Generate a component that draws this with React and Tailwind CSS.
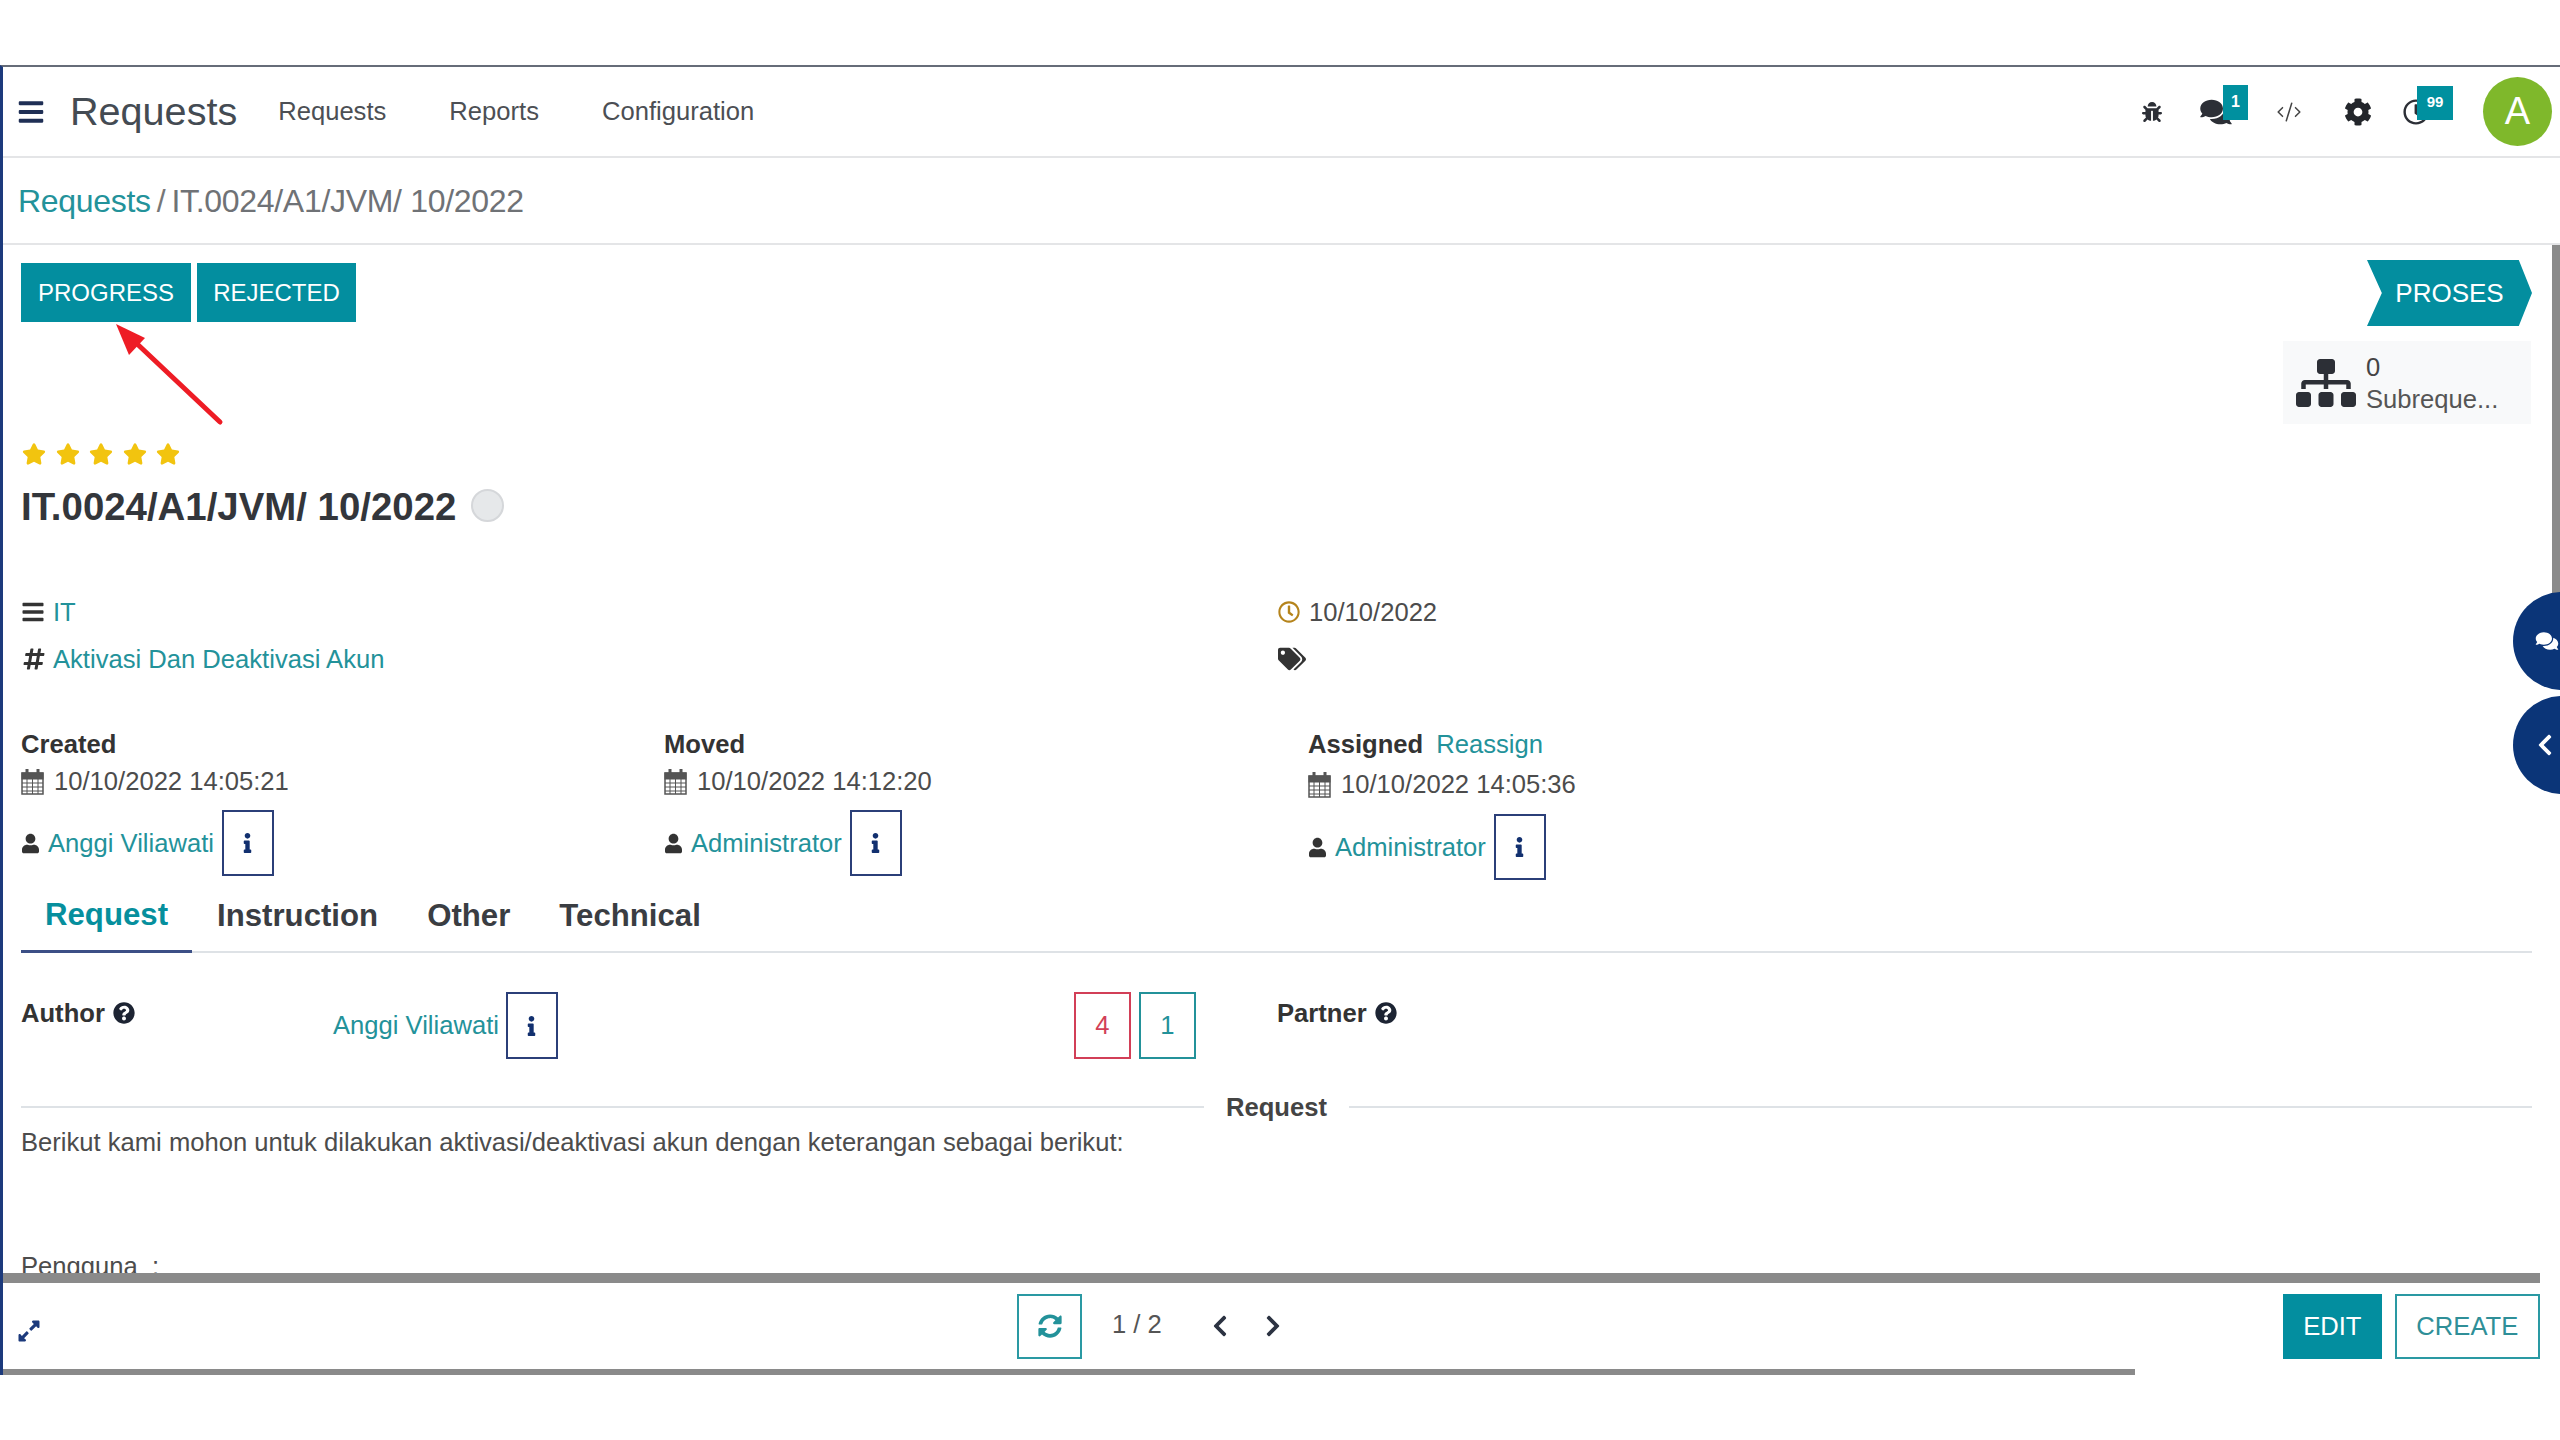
import { CodeXml } from 'lucide-react';
import {
    FaBars, FaBug, FaChevronLeft, FaChevronRight, FaCog, FaComments, FaExpandAlt,
    FaHashtag, FaInfo, FaQuestionCircle, FaRegClock, FaSitemap, FaStar, FaSyncAlt, FaTags, FaUser,
} from 'react-icons/fa';

function CalendarIcon() {
    return (
        <svg className="w-[23px] h-[27px] mr-[10px] text-[#555]" viewBox="0 0 23 27" fill="none" stroke="currentColor">
            <rect x="1" y="5" width="21" height="21" strokeWidth="1.5" />
            <rect x="1" y="5" width="21" height="6" fill="currentColor" />
            <path d="M1 15h21M1 19h21M1 23h21M6 11v15M11.500 11v15M17 11v15" strokeWidth="1" />
            <path d="M6 1v6M17 1v6" strokeWidth="3" />
        </svg>
    );
}

function InfoBox({ className = 'w-[51px] h-[66px]' }) {
    return (
        <div className={`border-2 border-[#2b3f78] flex items-center justify-center ${className}`}>
            <FaInfo className="w-[9px] h-[20px] text-[#12306f]" />
        </div>
    );
}

function Stamp({ label, extra, date, user, dateMt = 'mt-[7px]', userMt = 'mt-[14px]' }) {
    return (
        <div>
            <div className="flex items-baseline h-[30px] leading-[30px]">
                <span className="font-bold text-[#333]">{label}</span>
                {extra && <a className="ml-[13px] text-[#23929a]">{extra}</a>}
            </div>
            <div className={`flex items-center h-[30px] ${dateMt} text-[#4c4c4c]`}>
                <CalendarIcon />
                {date}
            </div>
            <div className={`flex items-center ml-[1px] ${userMt}`}>
                <FaUser className="w-[17px] h-[21px] text-[#333] mr-[9px]" />
                <a className="text-[#23929a]">{user}</a>
                <InfoBox className="ml-[8px] w-[52px] h-[66px]" />
            </div>
        </div>
    );
}

function NavIcon({ className = '', children }) {
    return <div className={`relative flex items-center justify-center ${className}`}>{children}</div>;
}

export default function App() {
    return (
        <div className="relative w-[2560px] h-[1440px] bg-white overflow-hidden pt-[65px] text-[25.6px] text-[#4c4c4c] font-['Liberation_Sans',Arial,sans-serif]">
            <div className="h-[1310px] border-t-2 border-[#666c78] border-l-[3px] border-l-[#1c3a7c] flex flex-col">
                {/* Top nav */}
                <header className="h-[91px] shrink-0 flex items-center border-b-2 border-[#e4e5e7]">
                    <FaBars className="ml-[14px] w-[28px] h-[28px] text-[#1f2f55]" />
                    <span className="ml-[25px] text-[39.6px] text-[#444b53]">Requests</span>
                    <nav className="ml-[41px] flex gap-[63px] text-[#4c4f54]">
                        <span>Requests</span>
                        <span>Reports</span>
                        <span>Configuration</span>
                    </nav>
                    <div className="ml-auto flex items-center h-full">
                        <NavIcon className="w-[24px]"><FaBug className="w-[20px] h-[20px] text-[#2c2f36]" /></NavIcon>
                        <NavIcon className="ml-[36px] w-[32px]">
                            <FaComments className="w-[32px] h-[28px] text-[#2c2f36]" />
                            <span className="absolute -top-[13px] left-[23px] w-[25px] h-[35px] bg-[#00909f] text-white text-[16px] font-bold flex items-center justify-center">1</span>
                        </NavIcon>
                        <NavIcon className="ml-[43px] w-[28px]"><CodeXml className="w-[28px] h-[26px] text-[#444]" strokeWidth={1.4} /></NavIcon>
                        <NavIcon className="ml-[41px] w-[28px]"><FaCog className="w-[28px] h-[28px] text-[#23262b]" /></NavIcon>
                        <NavIcon className="ml-[30px] w-[28px]">
                            <FaRegClock className="w-[26px] h-[26px] text-[#2c2f36]" />
                            <span className="absolute -top-[13px] left-[15px] w-[36px] h-[34px] bg-[#00909f] text-white text-[15px] font-bold flex items-center justify-center">99</span>
                        </NavIcon>
                        <div className="ml-[53px] mr-[8px] w-[69px] h-[69px] rounded-full bg-[#7fb82b] text-white text-[38px] flex items-center justify-center">A</div>
                    </div>
                </header>

                {/* Breadcrumb */}
                <div className="h-[87px] shrink-0 flex items-center border-b-2 border-[#e4e5e7] pl-[15px] text-[32px] -tracking-[0.3px]">
                    <a className="text-[#23929a]">Requests</a>
                    <span className="ml-[6px] text-[#777]">/</span>
                    <span className="ml-[6px] text-[#6f7276]">IT.0024/A1/JVM/ 10/2022</span>
                </div>

                {/* Form sheet */}
                <main className="relative flex-1 min-h-0 overflow-hidden pl-[18px] pr-[28px]">
                    <div className="flex justify-between items-start pt-[18px]">
                        <div className="flex gap-[6px]">
                            <button className="w-[170px] h-[59px] bg-[#038e9f] text-white text-[24px]">PROGRESS</button>
                            <button className="w-[159px] h-[59px] bg-[#038e9f] text-white text-[24px]">REJECTED</button>
                        </div>
                        <div className="flex flex-col items-end -mt-[3px]">
                            <div className="w-[165px] h-[66px] bg-[#038e9f] text-white text-[26px] flex items-center justify-center [clip-path:polygon(0_0,92%_0,100%_50%,92%_100%,0_100%,9%_50%)]">PROSES</div>
                            <div className="mt-[15px] mr-[1px] w-[248px] h-[83px] bg-[#f8f9fa] flex items-center pl-[13px]">
                                <FaSitemap className="w-[60px] h-[54px] text-[#2c2f36]" />
                                <div className="ml-[10px] leading-[32px]">
                                    <div className="text-[#444]">0</div>
                                    <div className="text-[#555]">Subreque...</div>
                                </div>
                            </div>
                        </div>
                    </div>

                    <div className="flex gap-[9.5px] mt-[18px] ml-[1px]">
                        {[0, 1, 2, 3, 4].map((i) => <FaStar key={i} className="w-[24px] h-[24px] text-[#f2c40f]" />)}
                    </div>
                    <div className="flex items-center mt-[17px]">
                        <h1 className="text-[38.4px] leading-[48px] font-bold text-[#33363b]">IT.0024/A1/JVM/ 10/2022</h1>
                        <span className="ml-[15px] -mt-[4px] w-[33px] h-[33px] rounded-full bg-[#e6e8ea] border-2 border-[#d5d7da]"></span>
                    </div>

                    <div className="grid grid-cols-[1257px_1fr] mt-[66px]">
                        <div>
                            <div className="flex items-center h-[30px]">
                                <FaBars className="ml-[1px] w-[22px] h-[24px] text-[#333]" />
                                <a className="ml-[9px] text-[#23929a]">IT</a>
                            </div>
                            <div className="flex items-center h-[30px] mt-[17px]">
                                <FaHashtag className="ml-[1px] w-[24px] h-[24px] text-[#333]" />
                                <a className="ml-[7px] text-[#23929a]">Aktivasi Dan Deaktivasi Akun</a>
                            </div>
                        </div>
                        <div>
                            <div className="flex items-center h-[30px]">
                                <FaRegClock className="w-[22px] h-[22px] text-[#b5841c]" />
                                <span className="ml-[9px]">10/10/2022</span>
                            </div>
                            <div className="flex items-center h-[30px] mt-[17px]">
                                <FaTags className="w-[28px] h-[24px] text-[#333]" />
                            </div>
                        </div>
                    </div>

                    <div className="grid grid-cols-[643px_644px_1fr] mt-[55px]">
                        <Stamp label="Created" date="10/10/2022 14:05:21" user="Anggi Viliawati" />
                        <Stamp label="Moved" date="10/10/2022 14:12:20" user="Administrator" />
                        <Stamp label="Assigned" extra="Reassign" date="10/10/2022 14:05:36" user="Administrator" dateMt="mt-[10px]" userMt="mt-[15px]" />
                    </div>

                    {/* Tabs */}
                    <div className="flex h-[72px] mt-[1px] border-b-2 border-[#dee2e6] text-[31.200px] font-bold text-[#3a3d42]">
                        <div className="w-[171px] h-[72px] border-b-[3px] border-[#3c4f86] text-[#068f9d] flex items-center justify-center">Request</div>
                        <span className="ml-[25px] flex items-center">Instruction</span>
                        <span className="ml-[49px] flex items-center">Other</span>
                        <span className="ml-[49px] flex items-center">Technical</span>
                    </div>

                    <div className="grid grid-cols-[1256px_1fr] mt-[41px]">
                        <div className="flex items-start">
                            <div className="w-[312px] h-[38px] flex items-center font-bold text-[#333]">
                                Author
                                <FaQuestionCircle className="ml-[8px] w-[22px] h-[22px] text-[#1d2433]" />
                            </div>
                            <div className="flex items-center -mt-[2px]">
                                <a className="text-[#23929a]">Anggi Viliawati</a>
                                <InfoBox className="ml-[7px] w-[52px] h-[67px]" />
                            </div>
                            <div className="ml-[516px] flex gap-[8px] -mt-[2px]">
                                <div className="w-[57px] h-[67px] border-2 border-[#d23f57] text-[#d23f57] flex items-center justify-center">4</div>
                                <div className="w-[57px] h-[67px] border-2 border-[#23929a] text-[#23929a] flex items-center justify-center">1</div>
                            </div>
                        </div>
                        <div className="h-[38px] flex items-center font-bold text-[#333]">
                            Partner
                            <FaQuestionCircle className="ml-[8px] w-[22px] h-[22px] text-[#1d2433]" />
                        </div>
                    </div>

                    <div className="flex items-center mt-[29px] font-bold text-[#444]">
                        <div className="flex-1 h-[2px] bg-[#dee2e6]"></div>
                        <span className="mx-[22px]">Request</span>
                        <div className="flex-1 h-[2px] bg-[#dee2e6]"></div>
                    </div>
                    <p className="mt-[1px] leading-[30px]">Berikut kami mohon untuk dilakukan aktivasi/deaktivasi akun dengan keterangan sebagai berikut:</p>
                    <p className="mt-[94px] leading-[30px]">Pengguna&nbsp;&nbsp;:</p>

                    {/* Annotation arrow */}
                    <svg className="absolute left-0 top-0 w-[300px] h-[300px]" viewBox="0 0 300 300">
                        <line x1="217" y1="177" x2="130" y2="95" stroke="#ee1c25" strokeWidth="5" strokeLinecap="round" />
                        <polygon points="113,79 142,93 126,110" fill="#ee1c25" />
                    </svg>
                </main>

                {/* Horizontal scrollbar of the sheet */}
                <div className="h-[10px] shrink-0 w-[2537px] bg-[#8a8a8a]"></div>

                {/* Pager and actions */}
                <footer className="h-[86px] shrink-0 flex items-center relative">
                    <FaExpandAlt className="ml-[14px] mt-[9px] w-[24px] h-[24px] text-[#1c3a7c]" />
                    <div className="ml-[976px] w-[65px] h-[65px] border-2 border-[#2a99a3] flex items-center justify-center">
                        <FaSyncAlt className="w-[24px] h-[24px] text-[#23929a]" />
                    </div>
                    <span className="ml-[30px] -mt-[3px] text-[#555]">1 / 2</span>
                    <FaChevronLeft className="ml-[49px] w-[18px] h-[24px] text-[#2c3342]" />
                    <FaChevronRight className="ml-[35px] w-[18px] h-[24px] text-[#2c3342]" />
                    <button className="ml-[1001px] w-[99px] h-[65px] bg-[#038e9f] text-white">EDIT</button>
                    <button className="ml-[13px] w-[145px] h-[65px] border-2 border-[#2a99a3] text-[#2f8f98]">CREATE</button>
                </footer>

                <div className="h-[6px] shrink-0 w-[2132px] bg-[#8a8a8a]"></div>
            </div>

            {/* Vertical scrollbar and floating side bubbles */}
            <div className="absolute left-[2552px] top-[245px] w-[8px] h-[348px] bg-[#8a8a8a]"></div>
            <div className="absolute left-[2513px] top-[592px] w-[98px] h-[98px] rounded-full bg-[#0b3578] flex items-center pl-[22px]">
                <FaComments className="w-[24px] h-[20px] text-white" />
            </div>
            <div className="absolute left-[2513px] top-[696px] w-[98px] h-[98px] rounded-full bg-[#0b3578] flex items-center pl-[24px]">
                <FaChevronLeft className="w-[16px] h-[24px] text-white" />
            </div>
        </div>
    );
}
